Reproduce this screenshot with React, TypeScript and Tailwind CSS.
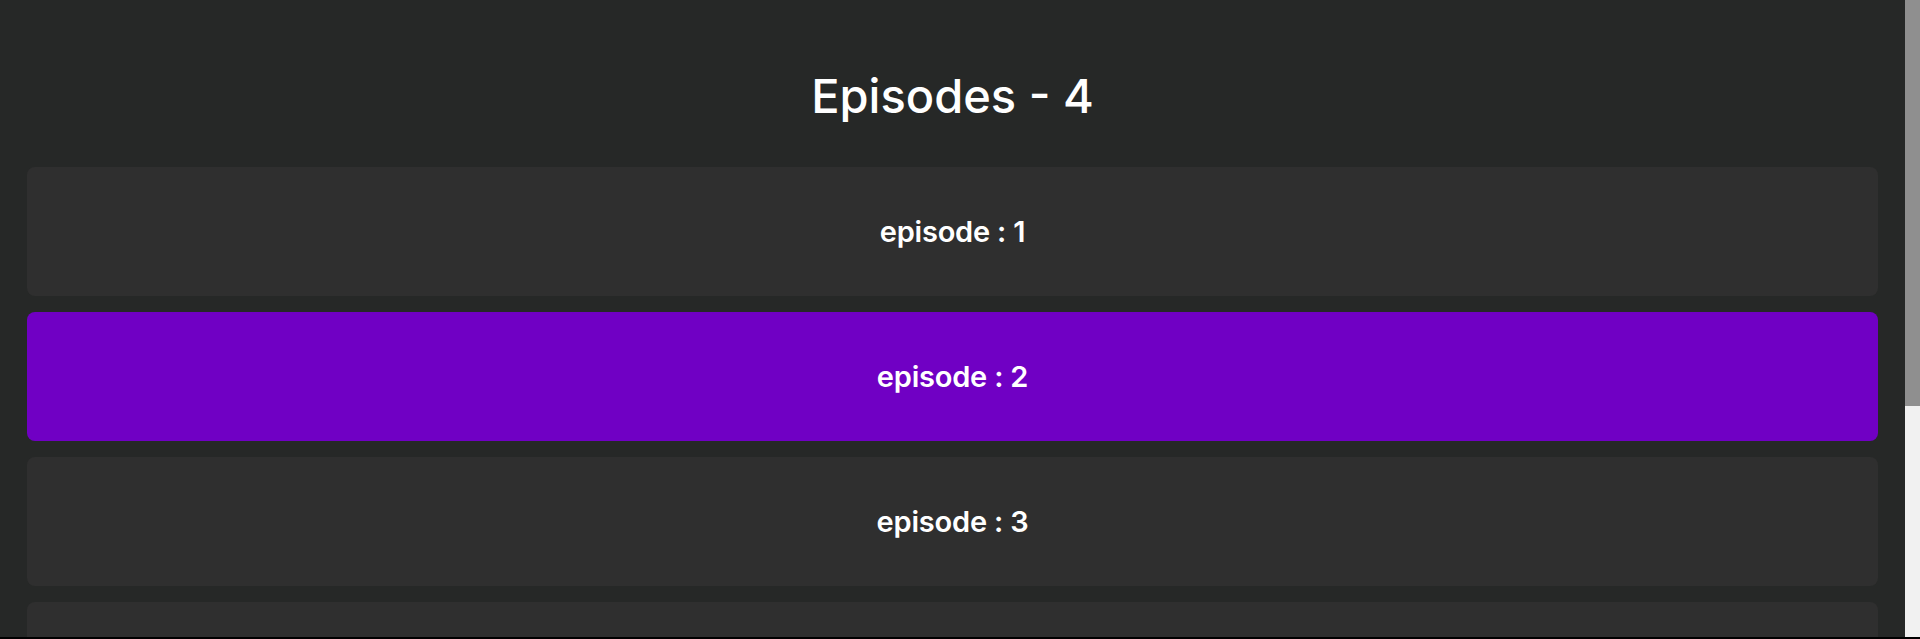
const episodes = [1, 2, 3, 4];

const App: React.FC = () => {
  const active = 2;
  return (
    <div className="flex h-screen flex-col bg-[#262827] font-['Inter','Liberation_Sans',sans-serif] text-white">
      <div className="flex min-h-0 flex-1">
        <div className="min-w-0 flex-1 overflow-hidden px-[27px] pt-[60px]">
          <h1 className="mb-[35px] text-center text-[47px] leading-[72px] font-medium">
            Episodes - 4
          </h1>
          <div className="flex flex-col gap-4">
            {episodes.map((ep) => (
              <div
                key={ep}
                className={
                  ep === active
                    ? "flex h-[129px] shrink-0 cursor-pointer items-center justify-center rounded-lg bg-[#7000c4]"
                    : "flex h-[129px] shrink-0 cursor-pointer items-center justify-center rounded-lg bg-[#2f2f2f]"
                }
              >
                <span className="text-[29px] font-semibold tracking-[-0.2px]">
                  episode : {ep}
                </span>
              </div>
            ))}
          </div>
        </div>
        {/* scrollbar */}
        <div className="flex w-[15px] flex-col bg-[#f1f1f1]">
          <div className="h-[406px] bg-[#8f8f8f]" />
        </div>
      </div>
      <div className="h-[2px] bg-black" />
    </div>
  );
};

export default App;
